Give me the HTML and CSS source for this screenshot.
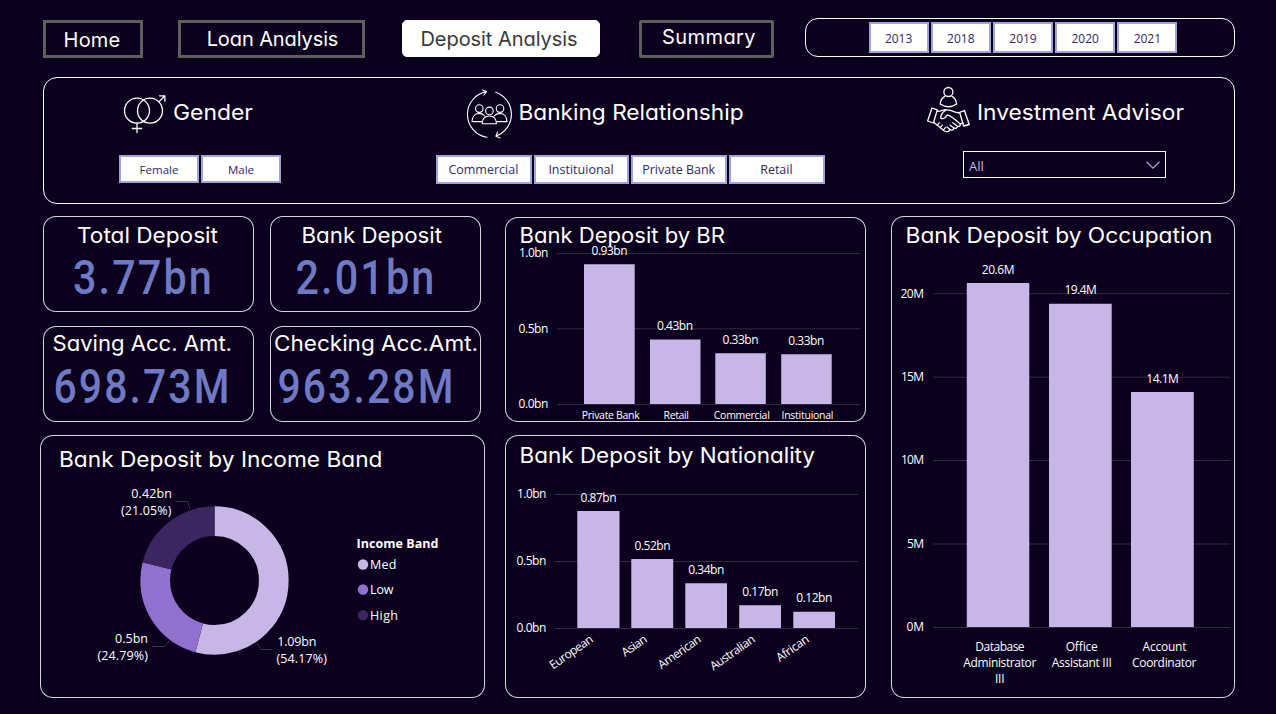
FILE: index.html
```html
<!DOCTYPE html>
<html lang="en">
<head>
<meta charset="utf-8">
<title>Deposit Analysis</title>
<link rel="stylesheet" href="styles.css">
</head>
<body>
<div class="page">
  <header class="topbar">
    <nav class="nav">
      <a class="tab tab-home">Home</a>
      <a class="tab tab-loan">Loan Analysis</a>
      <a class="tab tab-deposit">Deposit Analysis</a>
      <a class="tab tab-summary">Summary</a>
    </nav>
    <div class="years">
      <button class="chip">2013</button><button class="chip">2018</button><button class="chip">2019</button><button class="chip">2020</button><button class="chip">2021</button>
    </div>
  </header>

  <section class="filters">
    <div class="filter gender">
      <svg class="head" width="240" height="60" viewBox="118 84 240 60">
        <g class="ico">
          <circle cx="137" cy="110.7" r="12.5"/><circle cx="150" cy="110.7" r="12.5"/>
          <path d="M137 123.2V132.5M132.3 128.5H141.7M158.9 101.9L164.6 96M159.5 95.8H164.9V101.2"/>
        </g>
        <text class="title" x="173" y="120" textLength="80" lengthAdjust="spacingAndGlyphs">Gender</text>
      </svg>
      <div class="chips"><button class="chip">Female</button><button class="chip">Male</button></div>
    </div>
    <div class="filter banking">
      <svg class="head" width="300" height="60" viewBox="460 84 300 60">
        <g class="ico thin">
          <path d="M487.3 91.6A23.2 23.2 0 0 0 488 137.3M496.7 92.2A23.2 23.2 0 0 1 497.6 135.8M483.6 89.9L487.6 91.7L484.9 95M498.6 132L496.9 136.3L501 138"/>
          <circle cx="480.3" cy="108.6" r="3.8"/><circle cx="501" cy="108.6" r="3.8"/><circle cx="490.4" cy="110.9" r="3.8"/>
          <path d="M482.5 121.6H473C473 117 475.8 113.6 480.3 113.4C482.7 113.5 484.5 114.4 485.8 116M498 121.6H508C507.9 117 505.2 113.6 501 113.4C498.4 113.5 496.4 114.4 495.1 116M483.2 123.8C483.4 119 486.2 116 490.4 116C494.5 116 497.2 119 497.4 123.8Z"/>
        </g>
        <text class="title" x="519.5" y="120" textLength="225" lengthAdjust="spacingAndGlyphs">Banking Relationship</text>
      </svg>
      <div class="chips"><button class="chip">Commercial</button><button class="chip">Instituional</button><button class="chip">Private Bank</button><button class="chip">Retail</button></div>
    </div>
    <div class="filter advisor">
      <svg class="head" width="270" height="60" viewBox="920 84 270 60">
        <g class="ico">
          <circle cx="948.4" cy="92" r="4.5"/>
          <path d="M944.8 96.4C942 98 940.4 101 940.2 104C945.4 107.4 951.6 107.4 956.6 104C956.3 101 954.8 98 952 96.4"/>
          <path d="M932 108L937.4 109.8L933.4 123L927.6 121ZM964.4 110.5L959.6 112.3L963.6 126L969.2 124.5Z"/>
          <path d="M937 111.3C940.5 111.5 942.8 110 945.4 109.7L948 110.2C951.8 109.5 955 113.7 959.8 112.6M945.5 110.5C942.5 112 940.4 115.5 940.8 118.2C943.3 119.6 946 117.3 947.2 114.9C950.6 115.2 955.5 120.4 959.6 123.4C961.5 125.1 959.4 127.3 957.3 126L952.8 122.7M957.3 126C957.9 128.1 955.2 129 953.8 127.8L950 125.2M953.8 127.8C953.9 130 951.6 130.8 949.8 129.2L946.9 127M949.8 129.2C949.8 131.6 946.6 132.6 944 130.7L933.7 122.2M937.2 125.3L939.2 122.8M940.2 127.7L942.4 125.1M943.3 130.2L945.4 127.7M960.8 123.6L963 123.2"/>
        </g>
        <text class="title" x="977" y="120" textLength="207" lengthAdjust="spacingAndGlyphs">Investment Advisor</text>
      </svg>
      <div class="select"><span>All</span><svg width="14" height="8" viewBox="0 0 14 8"><path d="M.5 .8L7 7.2L13.5 .8"/></svg></div>
    </div>
  </section>

  <main class="board">
    <div class="left">
      <div class="kpis">
        <article class="panel"><svg viewBox="43 216 211 96">
          <text class="title" x="77" y="243" textLength="141" lengthAdjust="spacingAndGlyphs">Total Deposit</text>
          <text class="value" x="73" y="293.5" textLength="141" lengthAdjust="spacingAndGlyphs">3.77bn</text></svg></article>
        <article class="panel"><svg viewBox="270 216 211 96">
          <text class="title" x="301.5" y="243" textLength="140.5" lengthAdjust="spacingAndGlyphs">Bank Deposit</text>
          <text class="value" x="295.5" y="293.5" textLength="141" lengthAdjust="spacingAndGlyphs">2.01bn</text></svg></article>
        <article class="panel"><svg viewBox="43 326 211 96">
          <text class="title" x="52.5" y="351" textLength="179.5" lengthAdjust="spacingAndGlyphs">Saving Acc. Amt.</text>
          <text class="value" x="53.5" y="402.5" textLength="178" lengthAdjust="spacingAndGlyphs">698.73M</text></svg></article>
        <article class="panel"><svg viewBox="270 326 211 96">
          <text class="title" x="274" y="351" textLength="204" lengthAdjust="spacingAndGlyphs">Checking Acc.Amt.</text>
          <text class="value" x="277.5" y="402.5" textLength="178" lengthAdjust="spacingAndGlyphs">963.28M</text></svg></article>
      </div>
      <article class="panel income"><svg viewBox="40 435 445 263">
        <text class="title" x="59" y="467.3" textLength="323.5" lengthAdjust="spacingAndGlyphs">Bank Deposit by Income Band</text>
        <g class="ring" transform="rotate(-90 214.5 580.5)">
          <circle class="s-med" cx="214.5" cy="580.5" r="59.3" pathLength="100" stroke-dasharray="54.17 45.83"/>
          <circle class="s-low" cx="214.5" cy="580.5" r="59.3" pathLength="100" stroke-dasharray="24.79 75.21" stroke-dashoffset="-54.17"/>
          <circle class="s-high" cx="214.5" cy="580.5" r="59.3" pathLength="100" stroke-dasharray="21.04 78.96" stroke-dashoffset="-78.96"/>
        </g>
        <path class="leader" d="M175.5 501.5H187.5L190 509M152 646.5H164.5L169 641M256.5 643L261 649.5H272.5"/>
        <g class="lab">
          <text x="131.3" y="497.5" textLength="40.5">0.42bn</text><text x="121" y="515" textLength="50.5">(21.05%)</text>
          <text x="115" y="642.5" textLength="33">0.5bn</text><text x="97.5" y="660" textLength="50.5">(24.79%)</text>
          <text x="277.3" y="646" textLength="39">1.09bn</text><text x="276.5" y="663" textLength="50.5">(54.17%)</text>
          <text class="bold" x="356.5" y="548" textLength="82">Income Band</text>
          <text x="370" y="569" textLength="26.5">Med</text><text x="370" y="594" textLength="23.5">Low</text><text x="370" y="620" textLength="28">High</text>
        </g>
        <circle class="f-med" cx="363" cy="564.5" r="5.2"/><circle class="f-low" cx="363" cy="589.5" r="5.2"/><circle class="f-high" cx="363" cy="615.3" r="5.2"/>
      </svg></article>
    </div>

    <div class="middle">
      <article class="panel br"><svg viewBox="505 217 361 205">
        <text class="title" x="519.5" y="243" textLength="205.5" lengthAdjust="spacingAndGlyphs">Bank Deposit by BR</text>
        <path class="grid" d="M557 253.5H860M557 328.8H860M557 404.5H860"/>
        <g class="bar"><path d="M584 264.3H634.7V404H584ZM650 339.5H700.5V404H650ZM715.3 353.3H765.8V404H715.3ZM781.2 354.3H831.7V404H781.2Z"/></g>
        <g class="lab">
          <text x="519" y="257.2" textLength="29.3">1.0bn</text><text x="518.5" y="333.2" textLength="29.8">0.5bn</text><text x="518.5" y="408.2" textLength="29.8">0.0bn</text>
          <text x="591.5" y="255.2" textLength="36">0.93bn</text><text x="657" y="330.2" textLength="36">0.43bn</text><text x="722.5" y="344.3" textLength="36">0.33bn</text><text x="788.3" y="345.3" textLength="36">0.33bn</text>
        </g>
        <g class="lab small">
          <text x="581.8" y="419" textLength="58">Private Bank</text><text x="663.5" y="419" textLength="25.5">Retail</text><text x="713.8" y="419" textLength="56">Commercial</text><text x="781.5" y="419" textLength="52">Instituional</text>
        </g>
      </svg></article>
      <article class="panel nation"><svg viewBox="505 435 361 263">
        <text class="title" x="519.5" y="463" textLength="295.5" lengthAdjust="spacingAndGlyphs">Bank Deposit by Nationality</text>
        <path class="grid" d="M555 494.5H858M555 561.5H858M555 628.5H858"/>
        <g class="bar"><path d="M577.3 511H619.5V628H577.3ZM631.3 559H673.2V628H631.3ZM685.3 583.2H727V628H685.3ZM739.2 605.2H781V628H739.2ZM793.3 611.7H835V628H793.3Z"/></g>
        <g class="lab">
          <text x="517" y="498" textLength="29.3">1.0bn</text><text x="516.5" y="565.2" textLength="29.8">0.5bn</text><text x="516.5" y="632.2" textLength="29.8">0.0bn</text>
          <text x="580.5" y="502.2" textLength="36">0.87bn</text><text x="634.5" y="550.2" textLength="36">0.52bn</text><text x="688.3" y="574.2" textLength="36">0.34bn</text><text x="742.3" y="596.2" textLength="36">0.17bn</text><text x="796.3" y="602.2" textLength="36">0.12bn</text>
          <g class="tilt">
            <text transform="translate(594 641) rotate(-35)" textLength="50">European</text>
            <text transform="translate(648 641) rotate(-35)" textLength="28">Asian</text>
            <text transform="translate(702 641) rotate(-35)" textLength="49.5">American</text>
            <text transform="translate(756 641) rotate(-35)" textLength="52">Australian</text>
            <text transform="translate(810 641) rotate(-35)" textLength="37">African</text>
          </g>
        </g>
      </svg></article>
    </div>

    <article class="panel occupation"><svg viewBox="891 216 344 482">
      <text class="title" x="905.5" y="243" textLength="307" lengthAdjust="spacingAndGlyphs">Bank Deposit by Occupation</text>
      <path class="grid" d="M933 293.7H1230M933 377.2H1230M933 460.5H1230M933 544H1230M933 627.5H1230"/>
      <g class="bar"><path d="M966.8 283H1029.3V627H966.8ZM1049 303.8H1111.7V627H1049ZM1131 392H1193.8V627H1131Z"/></g>
      <g class="lab">
        <text x="900.5" y="298" textLength="23.5">20M</text><text x="901" y="381" textLength="23">15M</text><text x="901" y="464" textLength="23">10M</text><text x="907" y="548" textLength="17">5M</text><text x="906.5" y="631" textLength="17.5">0M</text>
        <text x="981.8" y="274" textLength="32.7">20.6M</text><text x="1064.5" y="294" textLength="32.3">19.4M</text><text x="1146.3" y="383" textLength="32.5">14.1M</text>
        <text x="975.3" y="651.3" textLength="49.3">Database</text><text x="963.3" y="667.3" textLength="73">Administrator</text><text x="995" y="683" textLength="9.5">III</text>
        <text x="1065.8" y="651.3" textLength="32">Office</text><text x="1051.8" y="667.3" textLength="60">Assistant III</text>
        <text x="1142.5" y="651.3" textLength="44">Account</text><text x="1132" y="667.3" textLength="64.5">Coordinator</text>
      </g>
    </svg></article>
  </main>
</div>
</body>
</html>
```
FILE: styles.css
```css
* { box-sizing: border-box; }
body { margin: 0; background: #0b001e; color: #fff; font-family: "Open Sans", "Noto Sans", sans-serif; }
.page { width: 1276px; height: 714px; padding: 18px 41px 16px 40px; overflow: hidden; }
svg { display: block; overflow: visible; }

.topbar { display: flex; justify-content: space-between; height: 39px; padding-left: 3px; }
.nav { display: flex; padding-top: 2px; }
.tab { display: flex; align-items: center; justify-content: center; height: 38px; border: 3px solid #605e5c; font: 400 20px/1 "Inter", sans-serif; font-feature-settings: "cv11"; white-space: nowrap; }
.tab-home { width: 100px; padding: 1px 2px 0 0; letter-spacing: .2px; }
.tab-loan { width: 187px; margin-left: 35px; padding: 0 0 1px 2px; letter-spacing: -.1px; }
.tab-deposit { width: 198px; height: 37px; margin-left: 37px; padding: 1px 4px 0 0; border: 1px solid #fff; border-radius: 5px; background: #fff; color: #3a3a3a; letter-spacing: -.05px; }
.tab-summary { width: 135px; margin-left: 39px; padding: 0 0 5px 5px; border-radius: 2px; letter-spacing: .4px; }

.years { display: flex; gap: 2px; justify-content: center; width: 430px; padding: 3px 0 0 6px; border: 1px solid #fff; border-radius: 13px; }
.chip { flex: none; padding: 0; border: 2px solid #9fa5da; background: #fff; color: #33295c; font: 12px/1 "Open Sans", sans-serif; white-space: nowrap; }
.years .chip { width: 60.2px; height: 31px; padding-top: 2px; }

.filters { display: grid; grid-template-columns: 393px 490px 1fr; height: 127px; margin: 20px 0 0 3px; border: 1px solid #fff; border-radius: 14px; }
.filter { padding-top: 6px; }
.chips { display: flex; gap: 2px; margin-top: 11px; }
.gender { padding-left: 74px; }
.gender .chips { padding-left: 1px; }
.gender .chip { width: 80px; height: 28px; padding-top: 2px; font-size: 11.5px; }
.banking .head { margin-left: 22px; }
.banking .chips { margin-left: -1px; }
.banking .chip { width: 95.7px; height: 29px; padding: 2px 1px 0 0; font-size: 12.5px; }
.advisor .head { margin-left: -7px; }
.select { display: flex; align-items: center; justify-content: space-between; width: 203px; height: 27px; margin: 7px 0 0 36px; padding: 3px 5px 0 5px; border: 1px solid #fff; color: #c8b6e6; font-size: 13px; line-height: 1; }
.select svg { margin-top: -2px; }
.select path { fill: none; stroke: #a9a2e0; stroke-width: 1.2; }

.ico { fill: none; stroke: #fff; stroke-width: 1.3; stroke-linejoin: round; stroke-linecap: round; }
.thin { stroke-width: 1.1; }
.title { fill: #fff; font: 400 21.5px "Inter", sans-serif; font-feature-settings: "cv11"; }
.value { fill: #6f79c4; font: 500 48px "Roboto", sans-serif; letter-spacing: 2.5px; }

.board { display: grid; grid-template-columns: 445px 366px 344px; column-gap: 20px; height: 482px; margin-top: 12px; }
.middle { display: flex; flex-direction: column; gap: 13px; width: 361px; padding-top: 1px; }
.occupation { width: 344px; height: 482px; }
.kpis { display: grid; grid-template-columns: 211px 211px; grid-template-rows: 96px 96px; gap: 14px 16px; margin-left: 3px; }
.panel { border-radius: 13px; box-shadow: inset 0 0 0 1px #d9d5df; }
.panel > svg { width: 100%; height: 100%; }
.income { width: 445px; height: 263px; margin-top: 13px; }
.br { height: 205px; }
.nation { height: 263px; }

.lab { fill: #fff; font: 500 12px "Open Sans", sans-serif; }
.income .lab { font-size: 12.5px; }
.lab .bold { font-weight: 700; }
.lab.small { font-size: 10.5px; }
.tilt { text-anchor: end; }
.grid { fill: none; stroke: #332b40; }
.bar { fill: #c8b6e6; }
.ring circle { fill: none; stroke-width: 29.7; }
.s-med { stroke: #c8b6e6; } .s-low { stroke: #9071ce; } .s-high { stroke: #3b265f; }
.f-med { fill: #c8b6e6; } .f-low { fill: #9071ce; } .f-high { fill: #3b265f; }
.leader { fill: none; stroke: #3d3548; }
```
